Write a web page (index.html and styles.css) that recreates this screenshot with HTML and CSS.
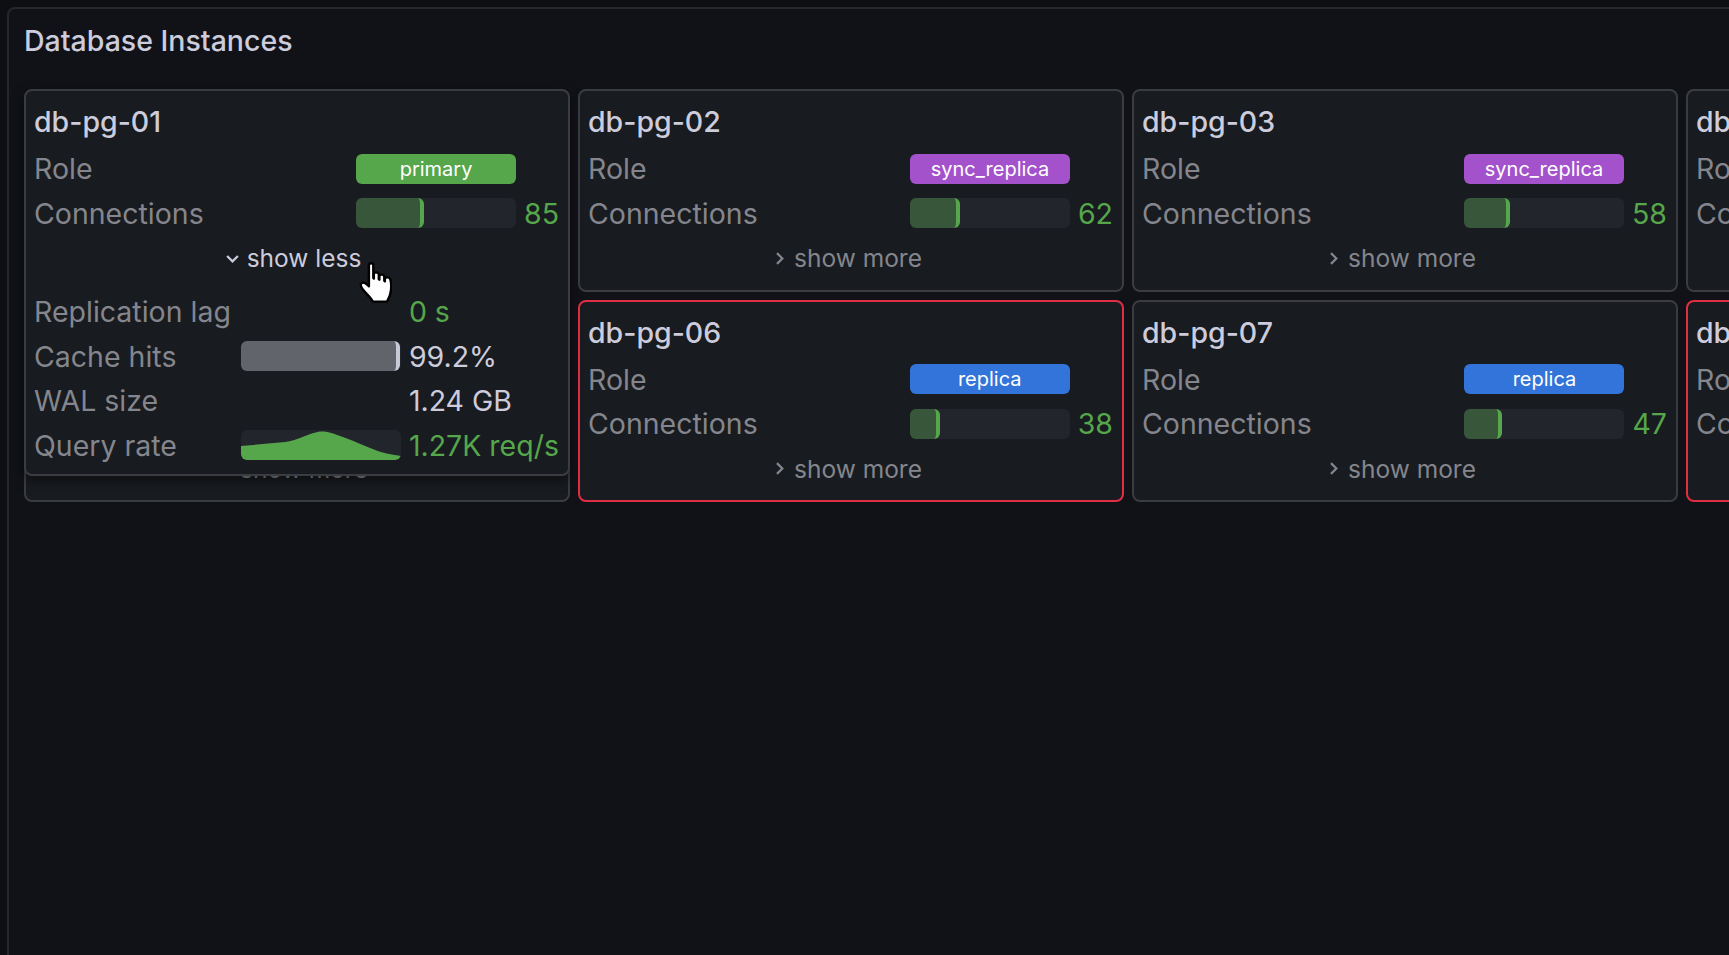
FILE: index.html
```html
<!DOCTYPE html>
<html lang="en">
<head>
    <meta charset="UTF-8">
    <title>Database Instances</title>
    <link rel="stylesheet" href="styles.css">
</head>
<body>
    <div class="panel">
        <h2 class="panel-title">Database Instances</h2>
        <div class="card-grid">
            <!-- db-pg-01 is expanded, it hangs over the card below it -->
            <div class="cell">
                <div class="card card-open">
                    <div class="card-name">db-pg-01</div>
                    <div class="rows">
                        <div class="label">Role</div>
                        <div class="pill pill-primary">primary</div>
                        <div></div>
                        <div class="label">Connections</div>
                        <div class="bar"><div class="fill" style="width: 42.5%"></div></div>
                        <div class="value ok">85</div>
                    </div>
                    <div class="toggle toggle-open">
                        <svg class="chevron" viewBox="0 0 12 12"><path d="M2.600 4.400 6 7.800l3.400-3.400"/></svg>show less
                    </div>
                    <div class="rows rows-extra">
                        <div class="label">Replication lag</div>
                        <div></div>
                        <div class="value ok">0 s</div>
                        <div class="label">Cache hits</div>
                        <div class="bar"><div class="fill fill-grey" style="width: 99.2%"></div></div>
                        <div class="value">99.2%</div>
                        <div class="label">WAL size</div>
                        <div></div>
                        <div class="value">1.24 GB</div>
                        <div class="label">Query rate</div>
                        <div class="bar">
                            <svg class="spark" viewBox="0 0 160 30" preserveAspectRatio="none"><path d="M0 16 L44 12 C50 11.500 56 9 64 6 C72 3 76 1.500 81 1.500 C88 1.500 94 4 102 7 C116 12 130 19 140 22 C148 24.500 154 25 160 26 V30 H0 Z"/></svg>
                        </div>
                        <div class="value ok">1.27K req/s</div>
                    </div>
                </div>
                <svg class="cursor" viewBox="1.500 2.600 30 37">
                    <path d="M10.500 5.500C10.500 3 14.500 3 14.500 5.500V17L15 17.500V13C16 11.500 19 11.500 19.500 13.500V18L20 18.500V15C21 13.500 24 13.500 24.500 15.500V19.500L25 20V17.500C26 16 29 16 30 18C31 22 31 27 30 31C29.500 34 28 36 27 38.500H14C13 35.500 8.500 32 5 27.500C3 25 2.500 22.500 4 21.500C5.500 20.500 8.500 22 10.500 24.500Z"/>
                </svg>
            </div>
            <div class="cell">
                <div class="card">
                    <div class="card-name">db-pg-02</div>
                    <div class="rows">
                        <div class="label">Role</div>
                        <div class="pill pill-sync">sync_replica</div>
                        <div></div>
                        <div class="label">Connections</div>
                        <div class="bar"><div class="fill" style="width: 31%"></div></div>
                        <div class="value ok">62</div>
                    </div>
                    <div class="toggle">
                        <svg class="chevron" viewBox="0 0 12 12"><path d="M4.400 2.600 7.800 6 4.400 9.400"/></svg>show more
                    </div>
                </div>
            </div>
            <div class="cell">
                <div class="card">
                    <div class="card-name">db-pg-03</div>
                    <div class="rows">
                        <div class="label">Role</div>
                        <div class="pill pill-sync">sync_replica</div>
                        <div></div>
                        <div class="label">Connections</div>
                        <div class="bar"><div class="fill" style="width: 29%"></div></div>
                        <div class="value ok">58</div>
                    </div>
                    <div class="toggle">
                        <svg class="chevron" viewBox="0 0 12 12"><path d="M4.400 2.600 7.800 6 4.400 9.400"/></svg>show more
                    </div>
                </div>
            </div>
            <div class="cell">
                <div class="card">
                    <div class="card-name">db-pg-04</div>
                    <div class="rows">
                        <div class="label">Role</div>
                        <div class="pill pill-replica">replica</div>
                        <div></div>
                        <div class="label">Connections</div>
                        <div class="bar"><div class="fill" style="width: 20%"></div></div>
                        <div class="value ok">40</div>
                    </div>
                    <div class="toggle">
                        <svg class="chevron" viewBox="0 0 12 12"><path d="M4.400 2.600 7.800 6 4.400 9.400"/></svg>show more
                    </div>
                </div>
            </div>
            <div class="cell">
                <div class="card">
                    <div class="card-name">db-pg-05</div>
                    <div class="rows">
                        <div class="label">Role</div>
                        <div class="pill pill-replica">replica</div>
                        <div></div>
                        <div class="label">Connections</div>
                        <div class="bar"><div class="fill" style="width: 22%"></div></div>
                        <div class="value ok">44</div>
                    </div>
                    <div class="toggle">
                        <svg class="chevron" viewBox="0 0 12 12"><path d="M4.400 2.600 7.800 6 4.400 9.400"/></svg>show more
                    </div>
                </div>
            </div>
            <div class="cell">
                <div class="card card-alert">
                    <div class="card-name">db-pg-06</div>
                    <div class="rows">
                        <div class="label">Role</div>
                        <div class="pill pill-replica">replica</div>
                        <div></div>
                        <div class="label">Connections</div>
                        <div class="bar"><div class="fill" style="width: 19%"></div></div>
                        <div class="value ok">38</div>
                    </div>
                    <div class="toggle">
                        <svg class="chevron" viewBox="0 0 12 12"><path d="M4.400 2.600 7.800 6 4.400 9.400"/></svg>show more
                    </div>
                </div>
            </div>
            <div class="cell">
                <div class="card">
                    <div class="card-name">db-pg-07</div>
                    <div class="rows">
                        <div class="label">Role</div>
                        <div class="pill pill-replica">replica</div>
                        <div></div>
                        <div class="label">Connections</div>
                        <div class="bar"><div class="fill" style="width: 23.5%"></div></div>
                        <div class="value ok">47</div>
                    </div>
                    <div class="toggle">
                        <svg class="chevron" viewBox="0 0 12 12"><path d="M4.400 2.600 7.800 6 4.400 9.400"/></svg>show more
                    </div>
                </div>
            </div>
            <div class="cell">
                <div class="card card-alert">
                    <div class="card-name">db-pg-08</div>
                    <div class="rows">
                        <div class="label">Role</div>
                        <div class="pill pill-replica">replica</div>
                        <div></div>
                        <div class="label">Connections</div>
                        <div class="bar"><div class="fill" style="width: 15%"></div></div>
                        <div class="value ok">30</div>
                    </div>
                    <div class="toggle">
                        <svg class="chevron" viewBox="0 0 12 12"><path d="M4.400 2.600 7.800 6 4.400 9.400"/></svg>show more
                    </div>
                </div>
            </div>
        </div>
    </div>
</body>
</html>
```

FILE: styles.css
```css
html, body { height: 100%; }
body { margin: 0; padding: 7px 0 0 7px; box-sizing: border-box; background-color: #0d0f13; overflow: hidden; font-family: "Inter", "Liberation Sans", sans-serif; color: #ccccdc; }

.panel { width: 2400px; height: 1000px; box-sizing: border-box; background-color: #111217; border: 2px solid #25272d; border-radius: 8px; padding: 0 15px; }
.panel-title { margin: 0; height: 80px; line-height: 64px; font-size: 28.5px; font-weight: 500; white-space: nowrap; }

.card-grid { display: grid; grid-template-columns: repeat(4, 546px); grid-auto-rows: 202.7px; gap: 8px; }
.cell { position: relative; }

.card { box-sizing: border-box; background-color: #181b1f; border: 2px solid #3a3c42; border-radius: 8px; padding: 0 9px 0 8px; height: 100%; }
.card-alert { border-color: #e02f44; }
.card-open { position: absolute; top: 0; left: 0; right: 0; height: 387px; z-index: 2; box-shadow: 0 4px 12px rgba(0, 0, 0, 0.5); }

.card-name { height: 62.5px; line-height: 61px; font-size: 28.5px; font-weight: 500; white-space: nowrap; }

.rows { display: grid; grid-template-columns: 1fr 160px auto; grid-auto-rows: 30px; column-gap: 8px; row-gap: 14.6px; align-items: center; font-size: 28.5px; }
.label { color: #85868d; white-space: nowrap; }
.value { white-space: nowrap; }
.ok { color: #56a64b; }

.pill { height: 30px; line-height: 30px; border-radius: 6px; color: #fff; font-size: 20px; text-align: center; }
.pill-primary { background-color: #56a64b; }
.pill-sync { background-color: #a352cc; }
.pill-replica { background-color: #3274d9; }

.bar { position: relative; height: 30px; background-color: #22252b; border-radius: 6px; overflow: hidden; }
.fill { box-sizing: border-box; height: 100%; background-color: #37563a; border-right: 4px solid #56a64b; border-radius: 0 6px 6px 0; }
.fill-grey { background-color: #62646c; border-right-color: #c7c9d4; }
.spark { display: block; width: 100%; height: 100%; }
.spark path { fill: #56a64b; }

.toggle { display: flex; align-items: center; justify-content: center; height: 36px; margin-top: 12px; padding-right: 9px; font-size: 24.5px; color: #85868d; }
.toggle-open { color: #ccccdc; }
.chevron { width: 19px; height: 19px; margin-right: 5px; }
.chevron path { fill: none; stroke: currentColor; stroke-width: 1.4; }
.rows-extra { margin-top: 20.5px; }

.cursor { position: absolute; left: 335px; top: 173px; width: 33px; height: 41px; z-index: 3; }
.cursor path { fill: #fff; stroke: #000; stroke-width: 2.2; stroke-linejoin: round; }
```
